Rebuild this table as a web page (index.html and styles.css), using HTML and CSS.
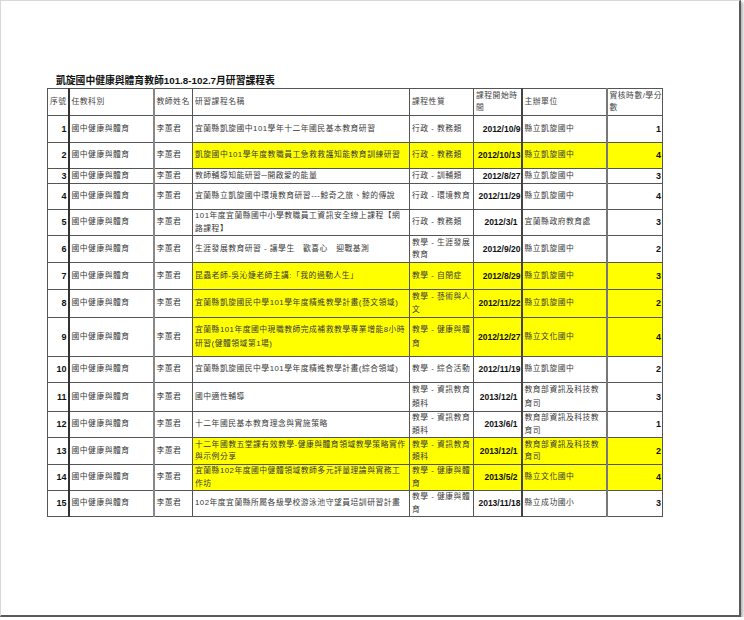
FILE: index.html
```html
<!DOCTYPE html>
<html lang="zh-Hant">
<head>
<meta charset="utf-8">
<title>凱旋國中健康與體育教師101.8-102.7月研習課程表</title>
<link rel="stylesheet" href="styles.css">
</head>
<body>
<div class="frame">
  <div class="title">凱旋國中健康與體育教師101.8-102.7月研習課程表</div>
  <table class="sheet">
    <colgroup>
      <col class="c1"><col class="c2"><col class="c3"><col class="c4"><col class="c5"><col class="c6"><col class="c7"><col class="c8">
    </colgroup>
    <tr class="h27 head">
      <td>序號</td><td class="b2">任教科別</td><td class="b3">教師姓名</td><td>研習課程名稱</td><td>課程性質</td><td>課程開始時<br>間</td><td class="b7">主辦單位</td><td>實核時數/學分<br>數</td>
    </tr>
    <tr class="h27">
      <td class="no">1</td><td class="b2">國中健康與體育</td><td class="b3">李蕙君</td><td>宜蘭縣凱旋國中101學年十二年國民基本教育研習</td><td>行政 - 教務類</td><td class="dt">2012/10/9</td><td class="b7">縣立凱旋國中</td><td class="num">1</td>
    </tr>
    <tr class="h26 hl">
      <td class="no">2</td><td class="b2">國中健康與體育</td><td class="b3">李蕙君</td><td>凱旋國中101學年度教職員工急救救護知能教育訓練研習</td><td>行政 - 教務類</td><td class="dt">2012/10/13</td><td class="b7">縣立凱旋國中</td><td class="num">4</td>
    </tr>
    <tr class="h15">
      <td class="no">3</td><td class="b2">國中健康與體育</td><td class="b3">李蕙君</td><td>教師輔導知能研習─開啟愛的能量</td><td>行政 - 訓輔類</td><td class="dt">2012/8/27</td><td class="b7">縣立凱旋國中</td><td class="num">3</td>
    </tr>
    <tr class="h26">
      <td class="no">4</td><td class="b2">國中健康與體育</td><td class="b3">李蕙君</td><td>宜蘭縣立凱旋國中環境教育研習---鯨奇之旅、鯨的傳說</td><td>行政 - 環境教育</td><td class="dt">2012/11/29</td><td class="b7">縣立凱旋國中</td><td class="num">4</td>
    </tr>
    <tr class="h26">
      <td class="no">5</td><td class="b2">國中健康與體育</td><td class="b3">李蕙君</td><td>101年度宜蘭縣國中小學教職員工資訊安全線上課程【網<br>路課程】</td><td>行政 - 教務類</td><td class="dt txt">2012/3/1</td><td class="b7">宜蘭縣政府教育處</td><td class="num">3</td>
    </tr>
    <tr class="h27">
      <td class="no">6</td><td class="b2">國中健康與體育</td><td class="b3">李蕙君</td><td>生涯發展教育研習 - 讓學生　歡喜心　迎戰基測</td><td>教學 - 生涯發展<br>教育</td><td class="dt">2012/9/20</td><td class="b7">縣立凱旋國中</td><td class="num">2</td>
    </tr>
    <tr class="h27 hl">
      <td class="no">7</td><td class="b2">國中健康與體育</td><td class="b3">李蕙君</td><td>昆蟲老師-吳沁婕老師主講:「我的過動人生」</td><td>教學 - 自閉症</td><td class="dt">2012/8/29</td><td class="b7">縣立凱旋國中</td><td class="num">3</td>
    </tr>
    <tr class="h28 hl">
      <td class="no">8</td><td class="b2">國中健康與體育</td><td class="b3">李蕙君</td><td>宜蘭縣凱旋國民中學101學年度精進教學計畫(藝文領域)</td><td>教學 - 藝術與人<br>文</td><td class="dt">2012/11/22</td><td class="b7">縣立凱旋國中</td><td class="num">2</td>
    </tr>
    <tr class="h39 hl">
      <td class="no">9</td><td class="b2">國中健康與體育</td><td class="b3">李蕙君</td><td>宜蘭縣101年度國中現職教師完成補救教學專業增能8小時<br>研習(健體領域第1場)</td><td>教學 - 健康與體<br>育</td><td class="dt">2012/12/27</td><td class="b7">縣立文化國中</td><td class="num">4</td>
    </tr>
    <tr class="h26">
      <td class="no">10</td><td class="b2">國中健康與體育</td><td class="b3">李蕙君</td><td>宜蘭縣凱旋國民中學101學年度精進教學計畫(綜合領域)</td><td>教學 - 綜合活動</td><td class="dt">2012/11/19</td><td class="b7">縣立凱旋國中</td><td class="num">2</td>
    </tr>
    <tr class="h29">
      <td class="no">11</td><td class="b2">國中健康與體育</td><td class="b3">李蕙君</td><td>國中適性輔導</td><td>教學 - 資訊教育<br>類科</td><td class="dt txt">2013/12/1</td><td class="b7">教育部資訊及科技教<br>育司</td><td class="num">3</td>
    </tr>
    <tr class="h26">
      <td class="no">12</td><td class="b2">國中健康與體育</td><td class="b3">李蕙君</td><td>十二年國民基本教育理念與實施策略</td><td>教學 - 資訊教育<br>類科</td><td class="dt txt">2013/6/1</td><td class="b7">教育部資訊及科技教<br>育司</td><td class="num">1</td>
    </tr>
    <tr class="h27 hl">
      <td class="no">13</td><td class="b2">國中健康與體育</td><td class="b3">李蕙君</td><td>十二年國教五堂課有效教學-健康與體育領域教學策略實作<br>與示例分享</td><td>教學 - 資訊教育<br>類科</td><td class="dt txt">2013/12/1</td><td class="b7">教育部資訊及科技教<br>育司</td><td class="num">2</td>
    </tr>
    <tr class="h26 hl">
      <td class="no">14</td><td class="b2">國中健康與體育</td><td class="b3">李蕙君</td><td>宜蘭縣102年度國中健體領域教師多元評量理論與實務工<br>作坊</td><td>教學 - 健康與體<br>育</td><td class="dt txt">2013/5/2</td><td class="b7">縣立文化國中</td><td class="num">4</td>
    </tr>
    <tr class="h26">
      <td class="no">15</td><td class="b2">國中健康與體育</td><td class="b3">李蕙君</td><td>102年度宜蘭縣所屬各級學校游泳池守望員培訓研習計畫</td><td>教學 - 健康與體<br>育</td><td class="dt">2013/11/18</td><td class="b7">縣立成功國小</td><td class="num">3</td>
    </tr>
  </table>
</div>
</body>
</html>
```
FILE: styles.css
```css
html, body {
  margin: 0;
  padding: 0;
  background: #ffffff;
}

.frame {
  box-sizing: border-box;
  width: 741px;
  height: 617px;
  padding: 73px 0 0 47px;
  border-top: 1px solid #d8d8d8;
  border-left: 1px solid #d8d8d8;
  border-right: 2px solid #5a5a5a;
  border-bottom: 2px solid #5a5a5a;
  box-shadow: 2px 2px 3px #b0b0b0;
  font-family: "Liberation Sans", "Noto Sans CJK TC", sans-serif;
}

.title {
  margin-left: 8px;
  height: 14px;
  line-height: 14px;
  font-size: 9.8px;
  font-weight: bold;
  color: #111;
  white-space: nowrap;
}

.sheet {
  table-layout: fixed;
  border-collapse: collapse;
  width: 615px;
  border: 1px solid #333;
  margin-left: -1px;
}

.c1 { width: 21px; }
.c2 { width: 85px; }
.c3 { width: 39px; }
.c4 { width: 217px; }
.c5 { width: 64px; }
.c6 { width: 48px; }
.c7 { width: 85px; }
.c8 { width: 56px; }

.sheet td {
  border: 1px solid #555;
  padding: 0 1px 0 2px;
  font-size: 7.8px;
  letter-spacing: 0.5px;
  line-height: 12px;
  color: #3a3a3a;
  white-space: nowrap;
  overflow: hidden;
  vertical-align: middle;
  background: #ffffff;
}

.sheet td:first-child {
  border-right: 2px solid #333;
}

.sheet td.b2 {
  border-right: 2px solid #888;
}

.sheet td.b7 {
  border-left: 2px solid #444;
  border-right: 2px solid #777;
}

.sheet .head td {
  color: #444;
}

.sheet td.no,
.sheet td.num,
.sheet td.dt {
  text-align: right;
  font-weight: bold;
  letter-spacing: 0;
  color: #111;
}

.sheet td.no { font-size: 9px; padding-right: 1px; }
.sheet td.num { font-size: 9px; padding-right: 1px; }
.sheet td.dt { font-size: 8.5px; padding-right: 0; }
.sheet td.dt.txt { padding-right: 3px; }

.sheet .hl td:nth-child(n+4) {
  background: #ffff00;
}

.h15 { height: 15px; }
.h26 { height: 26px; }
.h27 { height: 27px; }
.h28 { height: 28px; }
.h29 { height: 29px; }
.h39 { height: 39px; }

.h26 td, .h27 td, .h28 td { line-height: 12.5px; }
.h29 td, .h39 td { line-height: 14px; }
```
